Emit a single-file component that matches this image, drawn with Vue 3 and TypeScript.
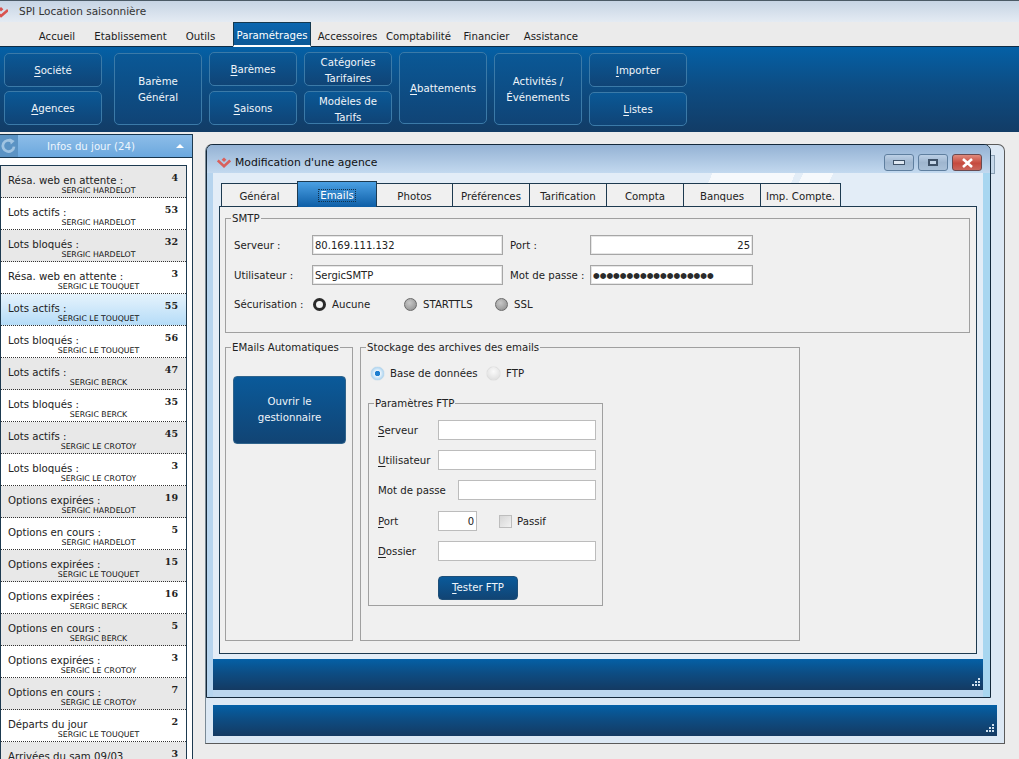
<script setup lang="ts">
const menu = [
  { t: 'Accueil', w: 58 }, { t: 'Etablissement', w: 89 }, { t: 'Outils', w: 51 },
  { t: 'Paramétrages', w: 78, on: true }, { t: 'Accessoires', w: 73 }, { t: 'Comptabilité', w: 69 },
  { t: 'Financier', w: 67 }, { t: 'Assistance', w: 62 },
]
const H = 'SERGIC HARDELOT', T = 'SERGIC LE TOUQUET', B = 'SERGIC BERCK', C = 'SERGIC LE CROTOY'
const rows: { l: string; s: string; v: number; sel?: boolean }[] = [
  { l: 'Résa. web en attente :', s: H, v: 4 },
  { l: 'Lots actifs :', s: H, v: 53 },
  { l: 'Lots bloqués :', s: H, v: 32 },
  { l: 'Résa. web en attente :', s: T, v: 3 },
  { l: 'Lots actifs :', s: T, v: 55, sel: true },
  { l: 'Lots bloqués :', s: T, v: 56 },
  { l: 'Lots actifs :', s: B, v: 47 },
  { l: 'Lots bloqués :', s: B, v: 35 },
  { l: 'Lots actifs :', s: C, v: 45 },
  { l: 'Lots bloqués :', s: C, v: 3 },
  { l: 'Options expirées :', s: H, v: 19 },
  { l: 'Options en cours :', s: H, v: 5 },
  { l: 'Options expirées :', s: T, v: 15 },
  { l: 'Options expirées :', s: B, v: 16 },
  { l: 'Options en cours :', s: B, v: 5 },
  { l: 'Options expirées :', s: C, v: 3 },
  { l: 'Options en cours :', s: C, v: 7 },
  { l: 'Départs du jour', s: T, v: 2 },
  { l: 'Arrivées du sam 09/03', s: T, v: 3 },
]
const tabs = [
  { t: 'Général', w: 77 }, { t: 'Emails', w: 80, on: true }, { t: 'Photos', w: 77 },
  { t: 'Préférences', w: 78 }, { t: 'Tarification', w: 78 }, { t: 'Compta', w: 78 },
  { t: 'Banques', w: 78 }, { t: 'Imp. Compte.', w: 81 },
]
</script>

<template>
  <div class="app">
    <header class="titlebar">
      <svg class="applogo" width="14" height="12" viewBox="0 0 14 12"><path d="M0 4l7 6 7-6" fill="none" stroke="#d9534f" stroke-width="2.6"/><path d="M7 1l2.4 2.2L7 5.4 4.6 3.2z" fill="#d9534f"/></svg>
      <span>SPI Location saisonnière</span>
    </header>
    <nav class="menubar">
      <span v-for="m in menu" :key="m.t" class="menuitem" :class="{ on: m.on }" :style="{ width: m.w + 'px' }">{{ m.t }}</span>
    </nav>
    <section class="ribbon">
      <div class="rcol w98 top1">
        <button class="rbtn"><span><u>S</u>ociété</span></button>
        <button class="rbtn"><span><u>A</u>gences</span></button>
      </div>
      <div class="rcol w88 top1 far"><button class="rbtn tall">Barème<br>Général</button></div>
      <div class="rcol w88 gap5">
        <button class="rbtn"><span><u>B</u>arèmes</span></button>
        <button class="rbtn"><span><u>S</u>aisons</span></button>
      </div>
      <div class="rcol w88 gap5">
        <button class="rbtn low2">Catégories<br>Tarifaires</button>
        <button class="rbtn short">Modèles de<br>Tarifs</button>
      </div>
      <div class="rcol w88"><button class="rbtn tall"><span><u>A</u>battements</span></button></div>
      <div class="rcol w88 top1"><button class="rbtn tall">Activités /<br>Événements</button></div>
      <div class="rcol w98 top1 gap5">
        <button class="rbtn"><span><u>I</u>mporter</span></button>
        <button class="rbtn"><span><u>L</u>istes</span></button>
      </div>
    </section>

    <main class="work">
      <aside class="side">
        <div class="sidehead">
          <span class="refresh">
            <svg width="18" height="18" viewBox="0 0 16 16"><path d="M12.5 8.5a5 5 0 1 1-2-4.6" fill="none" stroke="#a0c4e2" stroke-width="2.4"/><path d="M8.5 1l4.5 2.6-3.4 3z" fill="#a0c4e2"/></svg>
          </span>
          <span class="sidetitle">Infos du jour (24)</span>
          <span class="tri"></span>
        </div>
        <div class="list">
          <div v-for="(r, i) in rows" :key="i" class="row" :class="{ odd: i % 2 === 0 && i < 4 || [6, 8, 10, 12, 14, 16, 18].includes(i), sel: r.sel }">
            <div class="rowtop"><span>{{ r.l }}</span><b>{{ r.v }}</b></div>
            <div class="rowsub">{{ r.s }}</div>
          </div>
        </div>
      </aside>

      <div class="desktop">
        <div class="win back">
          <span class="stub"></span>
          <div class="status">
            <svg class="grip" width="9" height="9" viewBox="0 0 9 9"><path d="M7 0h2v2H7zM4 3h2v2H4zM7 3h2v2H7zM1 6h2v2H1zM4 6h2v2H4zM7 6h2v2H7z" fill="#cfe0ee"/></svg>
          </div>
        </div>

        <div class="win front">
          <div class="wtitle">
            <svg width="14" height="11" viewBox="0 0 14 11"><path d="M0.8 3.5L7 9.2l6.2-5.7" fill="none" stroke="#d9605c" stroke-width="2.6"/><path d="M7 0.6l2.4 2.2L7 5 4.6 2.8z" fill="#d9605c"/></svg>
            <span class="wname">Modification d'une agence</span>
            <span class="wbtns">
              <span class="wb"><i class="imin"></i></span>
              <span class="wb"><i class="imax"></i></span>
              <span class="wb close">
                <svg width="13" height="10" viewBox="0 0 13 10"><path d="M2 1l9 8M11 1L2 9" stroke="#fff" stroke-width="2.6"/></svg>
              </span>
            </span>
          </div>
          <div class="wbody">
            <div class="tabs">
              <span v-for="t in tabs" :key="t.t" class="tab" :class="{ on: t.on }" :style="{ width: t.w + 'px' }"><span class="tabtxt">{{ t.t }}</span></span>
            </div>
            <div class="pane">
              <fieldset class="group smtp">
                <legend>SMTP</legend>
                <div class="smtpgrid">
                  <label>Serveur :</label><input class="field" readonly value="80.169.111.132">
                  <label>Port :</label><input class="field right" readonly value="25">
                  <label>Utilisateur :</label><input class="field" readonly value="SergicSMTP">
                  <label>Mot de passe :</label><input class="field pw" readonly value="●●●●●●●●●●●●●●●●●●">
                </div>
                <div class="secure">
                  <span class="seclabel">Sécurisation :</span>
                  <span class="opt w91"><i class="drad active"></i>Aucune</span>
                  <span class="opt w91"><i class="drad"></i>STARTTLS</span>
                  <span class="opt"><i class="drad"></i>SSL</span>
                </div>
              </fieldset>
              <div class="lower">
                <fieldset class="group auto">
                  <legend>EMails Automatiques</legend>
                  <button class="bluebtn big">Ouvrir le<br>gestionnaire</button>
                </fieldset>
                <fieldset class="group store">
                  <legend>Stockage des archives des emails</legend>
                  <div class="storeopts">
                    <span class="opt w116"><i class="lrad sel"></i>Base de données</span>
                    <span class="opt"><i class="lrad"></i>FTP</span>
                  </div>
                  <fieldset class="group ftp">
                    <legend>Paramètres FTP</legend>
                    <div class="frow"><label class="flab"><u>S</u>erveur</label><input class="field light f158" readonly></div>
                    <div class="frow"><label class="flab"><u>U</u>tilisateur</label><input class="field light f158" readonly></div>
                    <div class="frow"><label class="flab l80">Mot de passe</label><input class="field light f138" readonly></div>
                    <div class="frow r11"><label class="flab"><u>P</u>ort</label><input class="field light f39 right" readonly value="0"><i class="check"></i><span class="passif">Passif</span></div>
                    <div class="frow"><label class="flab"><u>D</u>ossier</label><input class="field light f158" readonly></div>
                    <button class="bluebtn test"><span><u>T</u>ester FTP</span></button>
                  </fieldset>
                </fieldset>
              </div>
            </div>
          </div>
          <div class="status">
            <svg class="grip" width="9" height="9" viewBox="0 0 9 9"><path d="M7 0h2v2H7zM4 3h2v2H4zM7 3h2v2H7zM1 6h2v2H1zM4 6h2v2H4zM7 6h2v2H7z" fill="#cfe0ee"/></svg>
          </div>
        </div>
      </div>
    </main>
  </div>
</template>

<style>
html, body { margin: 0; height: 100%; overflow: hidden; background: #ececec; }
</style>

<style scoped>
.app { width: 1019px; height: 759px; overflow: hidden; display: flex; flex-direction: column; background: #ececec; font: 10.2px "DejaVu Sans", sans-serif; color: #222; }
u { text-underline-offset: 2px; }
button { font: inherit; padding: 0; cursor: default; }
.titlebar { height: 22px; box-sizing: border-box; border-top: 1px solid #4b5a66; padding-bottom: 2px; background: linear-gradient(#c6d4e4, #e4ebf3); display: flex; align-items: center; padding-left: 19px; position: relative; color: #333; font-size: 10.5px; }
.applogo { position: absolute; left: -6px; top: 5px; }
.menubar { height: 24px; display: flex; padding-left: 28px; background: #ebebeb; }
.menuitem { display: flex; align-items: center; justify-content: center; color: #1c1c1c; padding-top: 4px; box-sizing: border-box; }
.menuitem.on { margin-left: 7px; height: 25px; padding-top: 2px; color: #fff; background: linear-gradient(#0a66b0, #0b5896); border: 1px solid #14384f; border-bottom: 2px solid #fff; position: relative; z-index: 2; }
.ribbon { height: 86px; box-sizing: border-box; border-top: 1px solid #0e2c46; padding: 5px 0 0 4px; display: flex; gap: 7px; background: linear-gradient(#0460a6, #0d4d84 45%, #123c66); }
.rcol { display: flex; flex-direction: column; gap: 4px; }
.rcol.gap5 { gap: 5px; }
.w98 { width: 98px; }
.w88 { width: 88px; }
.top1 { padding-top: 1px; }
.far { margin-left: 5px; }
.rbtn { height: 34px; box-sizing: border-box; padding-top: 2px; color: #f0f5fa; line-height: 16px; background: linear-gradient(#0a5896, #104476); border: 1px solid #3b7aa8; border-radius: 5px; }
.rbtn.tall { height: 72px; }
.rbtn.short { height: 33px; padding-top: 2px; }
.rbtn.low2 { padding-top: 2px; }
.work { flex: 1; display: flex; min-height: 0; padding-top: 2px; position: relative; }
.side { width: 193px; flex: none; display: flex; flex-direction: column; background: #fff; border-right: 1px solid #1d3a50; box-sizing: border-box; overflow: hidden; }
.sidehead { height: 24px; flex: none; box-sizing: border-box; border-top: 1px solid #16344c; border-bottom: 1px solid #16344c; display: flex; align-items: center; background: linear-gradient(#8dbde8, #6ba8de); color: #eef6fd; position: relative; }
.refresh { width: 18px; height: 22px; display: flex; align-items: center; justify-content: center; background: #5b93c4; }
.sidetitle { width: 146px; text-align: center; }
.tri { margin-left: 12px; border: 4px solid transparent; border-top: 0; border-bottom: 4px solid #fff; }
.list { margin: 7px 6px 0 0; border: 1px solid #1d3a50; width: 185px; flex: none; }
.row { height: 32px; box-sizing: border-box; background: #fff; border-bottom: 1px dotted #333; padding: 8px 8px 0 7px; }
.row.odd { background: #e8e8e8; }
.row.sel { background: linear-gradient(#e6f3fc, #b5dcf8); }
.rowtop { display: flex; justify-content: space-between; line-height: 14px; height: 14px; }
.rowtop b { font: bold 9.5px "DejaVu Serif", serif; line-height: 12px; margin-top: -2px; }
.rowsub { font-size: 7.8px; line-height: 9px; margin-top: -2px; text-align: center; padding-left: 11px; color: #111; }
.desktop { flex: 1; position: relative; }
.win { position: absolute; box-sizing: border-box; border-radius: 7px 7px 0 0; }
.back { left: 12px; top: 10px; width: 800px; height: 600px; border: 1px solid #5a5a5a; border-left-color: #7a8a96; background: #dce8f4; display: flex; flex-direction: column; justify-content: flex-end; padding: 0 7px 7px; }
.stub { position: absolute; right: 9px; top: 10px; width: 4px; height: 17px; background: #c6d8ea; border: 1px solid #8aa0b4; border-left: 0; }
.front { left: 13px; top: 10px; width: 785px; height: 554px; border: 1px solid #14283a; background: #bcd6ee; display: flex; flex-direction: column; box-shadow: inset -7px 0 0 #a8d6f0, inset 6px 0 0 #b6d4ee; padding: 0 7px 7px 6px; }
.wtitle { height: 28px; flex: none; margin: 0 -7px 0 -6px; padding: 6px 0 0 10px; box-sizing: border-box; display: flex; align-items: center; gap: 4px; background: linear-gradient(#94b2d4, #c3d9ef); border-radius: 6px 6px 0 0; position: relative; font-size: 10.8px; color: #111; }
.wbtns { position: absolute; right: 8px; top: 9px; display: flex; gap: 4px; }
.wb { width: 30px; height: 17px; box-sizing: border-box; border: 1px solid #5f7f9f; border-radius: 3px; background: linear-gradient(#bcd0e6 0%, #9fb6cf 50%, #a9c0d8 100%); display: flex; align-items: center; justify-content: center; }
.wb.close { background: linear-gradient(#e08a7c, #c64a3e 55%, #c9665c); border-color: #6a4a50; }
.imin { width: 10px; height: 3px; background: #dfe8f2; border: 1px solid #3f5268; }
.imax { background: #c5d6e8; border: 2px solid #3f5268; width: 6px; height: 3px; }
.wbody { flex: 1; min-height: 0; background:
    linear-gradient(115deg, transparent 64.5%, #f6f9fc 64.5%, #f6f9fc 75.2%, transparent 75.2%, transparent 76.2%, #f6f9fc 76.2%, #f6f9fc 80.1%, transparent 80.1%) 0 0 / 100% 10px no-repeat, #e3edf7; padding: 10px 6px 5px; display: flex; flex-direction: column; }
.tabs { display: flex; height: 23px; padding-left: 2px; flex: none; position: relative; z-index: 1; }
.tab { box-sizing: border-box; height: 24px; flex: none; display: flex; align-items: center; justify-content: center; background: #f0f0f0; border: 1px solid #1d3a50; margin-right: -1px; padding-top: 3px; color: #222; }
.tab.on { height: 26px; margin-top: -2px; z-index: 1; color: #fff; background: linear-gradient(#4ba0e4, #0d5ea6); border-bottom: 0; }
.tab.on .tabtxt { outline: 1px dotted #12324c; padding: 0 1px; margin-top: -2px; }
.pane { flex: 1; box-sizing: border-box; background: #f0f0f0; border: 1px solid #1d3a50; padding: 5px 6px 0 5px; }
.group { margin: 0; box-sizing: border-box; border: 1px solid #a0a0a0; min-width: 0; padding: 0; font-size: 10.2px; }
.group legend { padding: 0 1px; line-height: 13px; }
.smtp { height: 121px; width: 745px; padding: 10px 8px 0; }
.smtp legend { margin-left: -3px; }
.smtpgrid { display: grid; grid-template-columns: 78px 191px 87px 163px; row-gap: 10px; align-items: center; }
.smtpgrid label:nth-of-type(even) { padding-left: 7px; white-space: nowrap; }
.field { box-sizing: border-box; height: 20px; padding: 0 2px; margin: 0; border: 1px solid #a6a6a6; box-shadow: inset 0 0 0 1px #e6e6e6; background: #fff; font: 10px "DejaVu Sans", sans-serif; color: #222; outline: none; min-width: 0; }
.field.light { border-color: #bcbcbc; box-shadow: none; }
.smtpgrid .field { width: 100%; }
.right { text-align: right; }
.pw { font-size: 7.7px; color: #2a2a2a; }
.secure { display: flex; align-items: center; height: 20px; margin-top: 9px; }
.seclabel { width: 79px; }
.opt { display: inline-flex; align-items: center; gap: 6px; }
.w91 { width: 91px; }
.w116 { width: 116px; }
.drad { width: 13px; height: 13px; box-sizing: border-box; border-radius: 50%; background: radial-gradient(circle at 40% 35%, #c8c8c8, #8a8a8a); border: 1px solid #6a6a6a; }
.drad.active { background: #f4f4f4; border: 3px solid #2a2a2a; }
.lrad { width: 13px; height: 13px; box-sizing: border-box; border-radius: 50%; background: radial-gradient(circle at 50% 35%, #fafafa, #d8d8d8); box-shadow: 0 0 1px #999; }
.lrad.sel { background: radial-gradient(circle, #1f7fd0 0 2.4px, #eaf4fc 3px, #a9d2ef 6.5px); box-shadow: 0 0 1px #5aa2d8; }
.lower { display: flex; gap: 7px; margin-top: 8px; }
.auto { width: 128px; height: 300px; padding: 22px 0 0 7px; }
.auto legend { margin-left: -2px; }
.store { width: 440px; height: 300px; padding: 0 0 0 7px; }
.store > legend { margin-left: -2px; }
.bluebtn { color: #f0f5fa; line-height: 16px; background: linear-gradient(#0a5a9a, #114474); border: 1px solid #30648c; border-radius: 4px; }
.big { width: 113px; height: 68px; }
.storeopts { display: flex; align-items: center; height: 14px; margin: 12px 0 0 3px; }
.ftp { width: 235px; height: 209px; margin-top: 17px; padding: 10px 0 0 9px; }
.ftp legend { margin-left: -4px; }
.frow { display: flex; align-items: center; height: 20px; margin-bottom: 10px; }
.frow.r11 { margin-top: 11px; }
.flab { width: 60px; flex: none; }
.l80 { width: 80px; }
.f158 { width: 158px; }
.f138 { width: 138px; }
.f39 { width: 39px; }
.check { width: 13px; height: 13px; margin-left: 22px; box-sizing: border-box; background: linear-gradient(135deg, #d6d6d6, #f2f2f2); border: 1px solid #bdbdbd; }
.passif { margin-left: 5px; }
.test { display: block; width: 80px; height: 24px; margin: 15px 0 0 60px; border-color: #1f4f78; }
.status { height: 31px; flex: none; display: flex; align-items: flex-end; justify-content: flex-end; padding: 0 3px 3px 0; box-sizing: border-box; background: linear-gradient(#0460a6, #0d4d84 45%, #143a62); }
</style>
